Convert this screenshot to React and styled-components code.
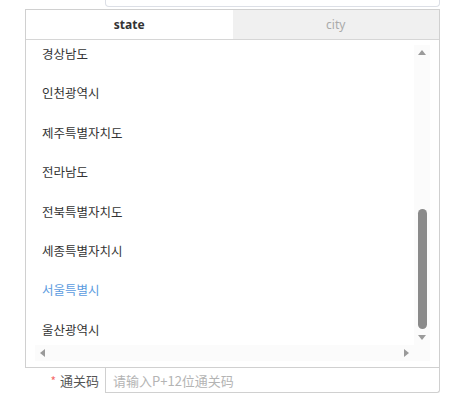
import React from "react";
import styled, { createGlobalStyle } from "styled-components";

const GlobalStyle = createGlobalStyle`
  html, body {
    margin: 0;
    padding: 0;
    background: #fff;
  }
  body {
    font-family: "Noto Sans", "Noto Sans CJK KR", sans-serif;
  }
`;

const Page = styled.div`
  width: 415px;
  padding-left: 25px;
  display: flex;
  flex-direction: column;
`;

const TopInput = styled.div`
  margin-left: 80px;
  height: 6px;
  border: 1px solid #dcdfe6;
  border-top: none;
  border-radius: 0 0 4px 4px;
  margin-bottom: 2px;
`;

const Panel = styled.div`
  border: 1px solid #d0d0d0;
  display: flex;
  flex-direction: column;
  height: 359px;
  box-sizing: border-box;
`;

const Tabs = styled.div`
  display: flex;
  height: 29px;
  border-bottom: 1px solid #d6d6d6;
`;

const Tab = styled.div`
  flex: 1;
  display: flex;
  align-items: center;
  justify-content: center;
  font-size: 12px;
  font-weight: ${(p) => (p.$active ? 700 : 400)};
  color: ${(p) => (p.$active ? "#333" : "#aaa")};
  background: ${(p) => (p.$active ? "#fff" : "#f0f0f0")};
`;

const Body = styled.div`
  flex: 1;
  min-height: 0;
  padding: 5px 9px 6px 9px;
  display: grid;
  grid-template-columns: 1fr 16px;
  grid-template-rows: 1fr 16px;
`;

const List = styled.ul`
  list-style: none;
  margin: 0;
  padding: 0 0 0 7px;
  overflow: hidden;
  display: flex;
  flex-direction: column;
  gap: 21.4px;
`;

const Item = styled.li`
  font-family: "Noto Sans CJK KR", sans-serif;
  font-size: 12.5px;
  line-height: 18px;
  color: ${(p) => (p.$selected ? "#5b9be0" : "#333")};
  white-space: nowrap;
`;

const VBar = styled.div`
  display: grid;
  grid-template-rows: 15px 1fr 15px;
  justify-items: center;
  align-items: center;
  background: #fbfbfb;
`;

const VTrack = styled.div`
  align-self: stretch;
  width: 100%;
  display: flex;
  flex-direction: column;
  align-items: center;
  padding-top: 149px;
  box-sizing: border-box;
`;

const Thumb = styled.div`
  width: 9px;
  height: 120px;
  border-radius: 5px;
  background: #8a8a8a;
`;

const HBar = styled.div`
  display: flex;
  align-items: center;
  justify-content: space-between;
  padding: 0 5px;
  background: #fbfbfb;
`;

const Corner = styled.div`
  background: #fbfbfb;
`;

const Arrow = ({ dir }) => {
  const pts = {
    up: "0,5 4,0 8,5",
    down: "0,0 4,5 8,0",
    left: "5,0 0,4 5,8",
    right: "0,0 5,4 0,8",
  }[dir];
  const v = dir === "up" || dir === "down";
  return (
    <svg width={v ? 8 : 5} height={v ? 5 : 8} viewBox={v ? "0 0 8 5" : "0 0 5 8"}>
      <polygon points={pts} fill="#9a9a9a" />
    </svg>
  );
};

const FormRow = styled.div`
  display: flex;
  height: 25px;
`;

const Label = styled.div`
  width: 80px;
  box-sizing: border-box;
  padding-right: 6px;
  display: flex;
  align-items: center;
  justify-content: flex-end;
  font-family: "Noto Sans CJK SC", sans-serif;
  font-size: 13px;
  color: #555;
`;

const Star = styled.span`
  color: #f56c6c;
  margin-right: 4px;
  font-size: 12px;
`;

const Input = styled.div`
  flex: 1;
  border: 1px solid #d0d0d0;
  border-top: none;
  border-radius: 0 0 3px 0;
  display: flex;
  align-items: center;
  padding-left: 7px;
  font-family: "Noto Sans CJK SC", sans-serif;
  font-size: 13px;
  color: #b4b4b4;
`;

const states = [
  "경상남도",
  "인천광역시",
  "제주특별자치도",
  "전라남도",
  "전북특별자치도",
  "세종특별자치시",
  "서울특별시",
  "울산광역시",
];

export default function App() {
  return (
    <>
      <GlobalStyle />
      <Page>
        <TopInput />
        <Panel>
          <Tabs>
            <Tab $active>state</Tab>
            <Tab>city</Tab>
          </Tabs>
          <Body>
            <List>
              {states.map((s) => (
                <Item key={s} $selected={s === "서울특별시"}>
                  {s}
                </Item>
              ))}
            </List>
            <VBar>
              <Arrow dir="up" />
              <VTrack>
                <Thumb />
              </VTrack>
              <Arrow dir="down" />
            </VBar>
            <HBar>
              <Arrow dir="left" />
              <Arrow dir="right" />
            </HBar>
            <Corner />
          </Body>
        </Panel>
        <FormRow>
          <Label>
            <Star>*</Star>通关码
          </Label>
          <Input>请输入P+12位通关码</Input>
        </FormRow>
      </Page>
    </>
  );
}
